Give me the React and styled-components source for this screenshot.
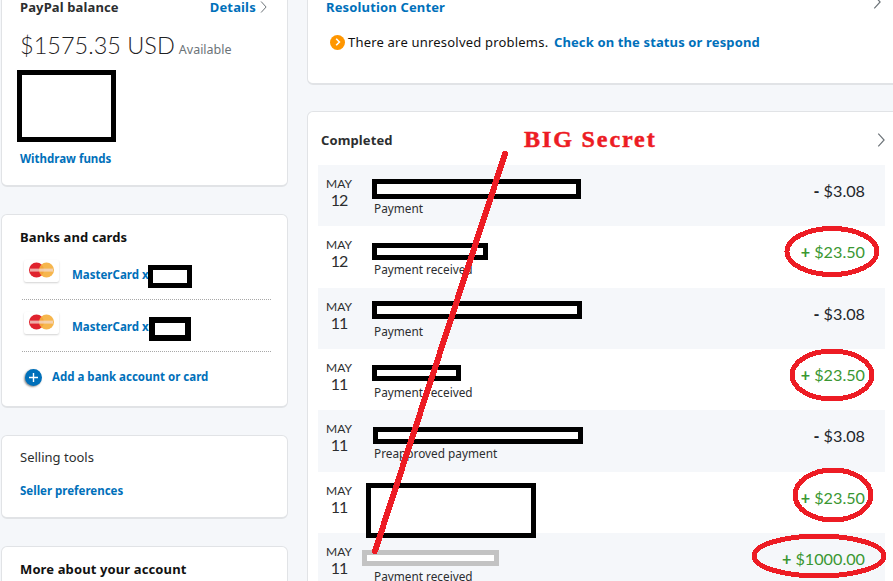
import styled, { createGlobalStyle } from 'styled-components';

const GlobalStyle = createGlobalStyle`
    html, body {
        margin: 0;
        padding: 0;
        background: #f5f7fa;
        overflow: hidden;
    }
    body {
        font-family: 'Noto Sans', 'Open Sans', sans-serif;
        color: #2c2e2f;
    }
`

const Page = styled.div`
    position: relative;
    width: 893px;
    height: 581px;
    overflow: hidden;
    display: flex;
    gap: 19px;
    padding-left: 1px;
    box-sizing: border-box;
`

const LeftColumn = styled.div`
    width: 287px;
    flex: none;
    display: flex;
    flex-direction: column;
    gap: 27px;
    margin-top: -12px;
`

const RightColumn = styled.div`
    width: 600px;
    flex: none;
    display: flex;
    flex-direction: column;
    gap: 26px;
    margin-top: -12px;
`

const Card = styled.section`
    box-sizing: border-box;
    height: ${props => props.$height}px;
    flex: none;
    background: #fff;
    border: 1px solid #e1e3e6;
    border-bottom-width: 2px;
    border-radius: 6px;
    padding: ${props => props.$padding || '0 18px'};
`

const CardHead = styled.div`
    display: flex;
    justify-content: space-between;
    align-items: center;
    height: 14px;
    padding-right: ${props => props.$inset || 0}px;
    h3 {
        line-height: 14px;
    }
`

const Heading = styled.h3`
    margin: 0;
    font-size: 13px;
    line-height: 20px;
    font-weight: 700;
    letter-spacing: 0.12px;
    color: ${props => props.$dark ? '#111' : '#2c2e2f'};
`

const PlainHeading = styled.h3`
    margin: 0;
    font-size: 13px;
    line-height: 20px;
    font-weight: 400;
`

const TextLink = styled.a`
    display: block;
    font-size: 11.5px;
    line-height: 18px;
    font-weight: 700;
    color: #0070ba;
    margin-top: ${props => props.$top || 0}px;
`

const HeadLink = styled.a`
    display: flex;
    align-items: center;
    gap: 4px;
    font-size: 13px;
    line-height: 14px;
    font-weight: 700;
    letter-spacing: 0.15px;
    color: #0070ba;
`

const TopChevron = styled.span`
    display: flex;
    margin-top: -10px;
`

const Balance = styled.div`
    display: flex;
    align-items: baseline;
    gap: 4px;
    margin-top: 15px;
    height: 32px;
    font-family: 'Lato', sans-serif;
    font-weight: 300;
    font-size: 23.5px;
    line-height: 32px;
    color: #1f2224;
`

const Available = styled.span`
    font-family: 'Noto Sans', sans-serif;
    font-size: 12.5px;
    font-weight: 400;
    color: #6c7378;
`

const AccountRow = styled.div`
    display: flex;
    align-items: center;
    gap: 13px;
    height: 52px;
    box-sizing: border-box;
    margin-left: 2px;
    width: 249px;
    border-bottom: 1px dotted #a8a8a8;
    padding: 2px 0 0 2px;
    &:first-of-type {
        margin-top: 1px;
    }
`

const CardThumb = styled.svg`
    width: 35px;
    height: 22px;
    flex: none;
    margin-top: -8px;
    border-radius: 2px;
    background: #fff;
    box-shadow: 0 1px 2px rgba(0, 0, 0, 0.18);
`

const AddRow = styled.div`
    display: flex;
    align-items: center;
    gap: 10px;
    height: 50px;
    margin-left: 5px;
`

const AddIcon = styled.span`
    width: 17px;
    height: 17px;
    border-radius: 50%;
    background: #0070ba;
    color: #fff;
    box-shadow: -1px 1px 2px rgba(0, 0, 0, 0.45);
    display: flex;
    align-items: center;
    justify-content: center;
`

const ProblemLine = styled.div`
    display: flex;
    align-items: center;
    gap: 3px;
    margin-top: 18px;
    margin-left: 4px;
    font-size: 13px;
    line-height: 20px;
    letter-spacing: 0.2px;
    color: #111;
    white-space: pre;
`

const ProblemLink = styled.a`
    font-weight: 700;
    letter-spacing: 0.13px;
    margin-left: -1px;
    color: #0070ba;
`

const AlertDot = styled.span`
    width: 15px;
    height: 15px;
    border-radius: 50%;
    background: #ff9600;
    color: #fff;
    display: flex;
    align-items: center;
    justify-content: center;
`

const ListHead = styled.div`
    display: flex;
    justify-content: space-between;
    align-items: center;
    box-sizing: border-box;
    height: 53px;
    padding: 2px 3px 0 3px;
    width: 570px;
`

const Rows = styled.div`
    width: 567px;
`

const Row = styled.div`
    display: grid;
    grid-template-columns: 42px 1fr auto;
    column-gap: 14px;
    height: 61.33px;
    box-sizing: border-box;
    padding: 11px 20px 0 0;
    background: ${props => props.$shaded ? '#f5f7fa' : '#fff'};
`

const DateCell = styled.div`
    text-align: center;
    color: #2c2e2f;
`

const Month = styled.div`
    font-family: 'Lato', sans-serif;
    font-size: 12px;
    line-height: 15px;
`

const Day = styled.div`
    font-family: 'Lato', sans-serif;
    font-size: 16px;
    line-height: 17px;
    letter-spacing: -1px;
`

const RowInfo = styled.div`
    padding-top: 24px;
    font-size: 11.8px;
    line-height: 16px;
    color: #2c2e2f;
`

const Amount = styled.div`
    font-family: 'Lato', sans-serif;
    font-size: 16.2px;
    line-height: 30px;
    color: ${props => props.$received ? '#3a9732' : '#23262a'};
`

const Sign = styled.span`
    font-weight: 700;
`

// blacked-out boxes somebody drew over the screenshot
const Redaction = styled.div`
    position: absolute;
    box-sizing: border-box;
    left: ${props => props.$x}px;
    top: ${props => props.$y}px;
    width: ${props => props.$w}px;
    height: ${props => props.$h}px;
    background: #fff;
    border: ${props => props.$weight || 5}px solid ${props => props.$color || '#000'};
`

const Scribbles = styled.svg`
    position: absolute;
    left: 0;
    top: 0;
    width: 893px;
    height: 581px;
    pointer-events: none;
`

const SecretLabel = styled.div`
    position: absolute;
    left: 524px;
    top: 124px;
    font-family: 'Liberation Serif', serif;
    font-weight: 700;
    font-size: 24px;
    line-height: 30px;
    letter-spacing: 1.9px;
    -webkit-text-stroke: 0.5px #ed1c24;
    color: #ed1c24;
    white-space: nowrap;
`

const Chevron = ({ size = 12 }) => (
    <svg width={size * 0.6} height={size} viewBox="0 0 6 12" fill="none" stroke="#6c7378" strokeWidth="1">
        <path d="M0.5 0.5 L5.5 6 L0.5 11.5" />
    </svg>
);

const MasterCardLogo = () => (
    <CardThumb viewBox="0 0 35 22">
        <circle cx="12.5" cy="10" r="7.5" fill="#e0232e" />
        <circle cx="22.5" cy="10" r="7.5" fill="#f5b03e" fillOpacity="0.92" />
        <rect x="6" y="8.6" width="23" height="3" fill="#f3d9d0" fillOpacity="0.75" />
    </CardThumb>
);

const transactions = [
    { day: 12, type: 'Payment', sign: '-', amount: '$3.08' },
    { day: 12, type: 'Payment received', sign: '+', amount: '$23.50', received: true },
    { day: 11, type: 'Payment', sign: '-', amount: '$3.08' },
    { day: 11, type: 'Payment received', sign: '+', amount: '$23.50', received: true },
    { day: 11, type: 'Preapproved payment', sign: '-', amount: '$3.08' },
    { day: 11, type: '', sign: '+', amount: '$23.50', received: true },
    { day: 11, type: 'Payment received', sign: '+', amount: '$1000.00', received: true },
];

const redactions = [
    { x: 17, y: 70, w: 99, h: 72 },
    { x: 148, y: 265, w: 44, h: 23 },
    { x: 149, y: 317, w: 42, h: 24, weight: 6 },
    { x: 372, y: 179, w: 209, h: 20 },
    { x: 372, y: 243, w: 116, h: 17 },
    { x: 372, y: 301, w: 210, h: 18 },
    { x: 372, y: 365, w: 89, h: 16 },
    { x: 373, y: 427, w: 210, h: 17 },
    { x: 366, y: 483, w: 170, h: 55 },
    { x: 362, y: 550, w: 137, h: 16, color: '#c3c3c3' },
];

const App = () => {
    const mappedRows = transactions.map((item, i) => {
        return (
            <Row key={i} $shaded={i % 2 === 0}>
                <DateCell>
                    <Month>MAY</Month>
                    <Day>{item.day}</Day>
                </DateCell>
                <RowInfo>{item.type}</RowInfo>
                <Amount $received={item.received}><Sign>{item.sign}</Sign> {item.amount}</Amount>
            </Row>
        )
    });

    return (
        <Page>
            <GlobalStyle />
            <LeftColumn>
                <Card $height={199} $padding="11px 18px 0">
                    <CardHead $inset={2}>
                        <Heading>PayPal balance</Heading>
                        <HeadLink>Details <Chevron /></HeadLink>
                    </CardHead>
                    <Balance>$1575.35 USD <Available>Available</Available></Balance>
                    <TextLink $top={89}>Withdraw funds</TextLink>
                </Card>
                <Card $height={194} $padding="12px 18px 0">
                    <Heading $dark>Banks and cards</Heading>
                    <AccountRow>
                        <MasterCardLogo />
                        <TextLink>MasterCard x</TextLink>
                    </AccountRow>
                    <AccountRow>
                        <MasterCardLogo />
                        <TextLink>MasterCard x</TextLink>
                    </AccountRow>
                    <AddRow>
                        <AddIcon>
                            <svg width="11" height="11" viewBox="0 0 11 11" stroke="#fff" strokeWidth="1.4">
                                <path d="M5.5 1 V10 M1 5.5 H10" />
                            </svg>
                        </AddIcon>
                        <TextLink>Add a bank account or card</TextLink>
                    </AddRow>
                </Card>
                <Card $height={84} $padding="11px 18px 0">
                    <PlainHeading>Selling tools</PlainHeading>
                    <TextLink $top={15}>Seller preferences</TextLink>
                </Card>
                <Card $height={60} $padding="12px 18px 0">
                    <Heading $dark>More about your account</Heading>
                </Card>
            </LeftColumn>
            <RightColumn>
                <Card $height={97} $padding="11px 18px 0">
                    <CardHead $inset={7}>
                        <HeadLink>Resolution Center</HeadLink>
                        <TopChevron><Chevron size={14} /></TopChevron>
                    </CardHead>
                    <ProblemLine>
                        <AlertDot>
                            <svg width="6" height="8" viewBox="0 0 6 8" fill="none" stroke="#fff" strokeWidth="1.6">
                                <path d="M1.2 0.8 L4.4 4 L1.2 7.2" />
                            </svg>
                        </AlertDot>
                        There are unresolved problems. <ProblemLink>Check on the status or respond</ProblemLink>
                    </ProblemLine>
                </Card>
                <Card $height={500} $padding="0 0 0 10px">
                    <ListHead>
                        <Heading>Completed</Heading>
                        <Chevron size={14} />
                    </ListHead>
                    <Rows>{mappedRows}</Rows>
                </Card>
            </RightColumn>
            {redactions.map((box, i) => (
                <Redaction key={i} $x={box.x} $y={box.y} $w={box.w} $h={box.h} $weight={box.weight} $color={box.color} />
            ))}
            <Scribbles viewBox="0 0 893 581" fill="none" stroke="#ed1c24" shapeRendering="crispEdges">
                <path d="M505 154 L375 551" strokeWidth="6" strokeLinecap="round" />
                <ellipse cx="832" cy="251.5" rx="45" ry="23" strokeWidth="5" />
                <ellipse cx="832" cy="375" rx="40" ry="24" strokeWidth="5" />
                <ellipse cx="833" cy="495" rx="38" ry="25" strokeWidth="5" />
                <ellipse cx="819" cy="556" rx="65" ry="20" strokeWidth="5" />
            </Scribbles>
            <SecretLabel>BIG Secret</SecretLabel>
        </Page>
    );
}

export default App;
